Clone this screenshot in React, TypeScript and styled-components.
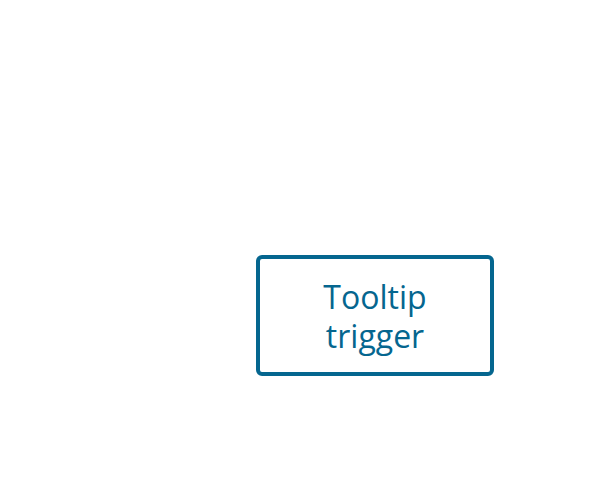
import React from "react";
import styled, { createGlobalStyle } from "styled-components";

const Global = createGlobalStyle`
  html, body { margin: 0; padding: 0; background: #ffffff; }
  body { font-family: "Open Sans", sans-serif; }
`;

const Page = styled.div`
  display: flex;
  align-items: flex-start;
  padding: 255px 0 0 256px;
  min-height: 488px;
  box-sizing: border-box;
`;

const Trigger = styled.button`
  box-sizing: border-box;
  width: 238px;
  height: 121px;
  border: 4px solid #05668f;
  border-radius: 6px;
  background: #ffffff;
  color: #05668f;
  font-family: "Open Sans", sans-serif;
  font-size: 32px;
  line-height: 39px;
  padding: 0 56px;
  text-align: center;
  cursor: pointer;
`;

export default function App() {
  return (
    <>
      <Global />
      <Page>
        <Trigger>Tooltip trigger</Trigger>
      </Page>
    </>
  );
}
